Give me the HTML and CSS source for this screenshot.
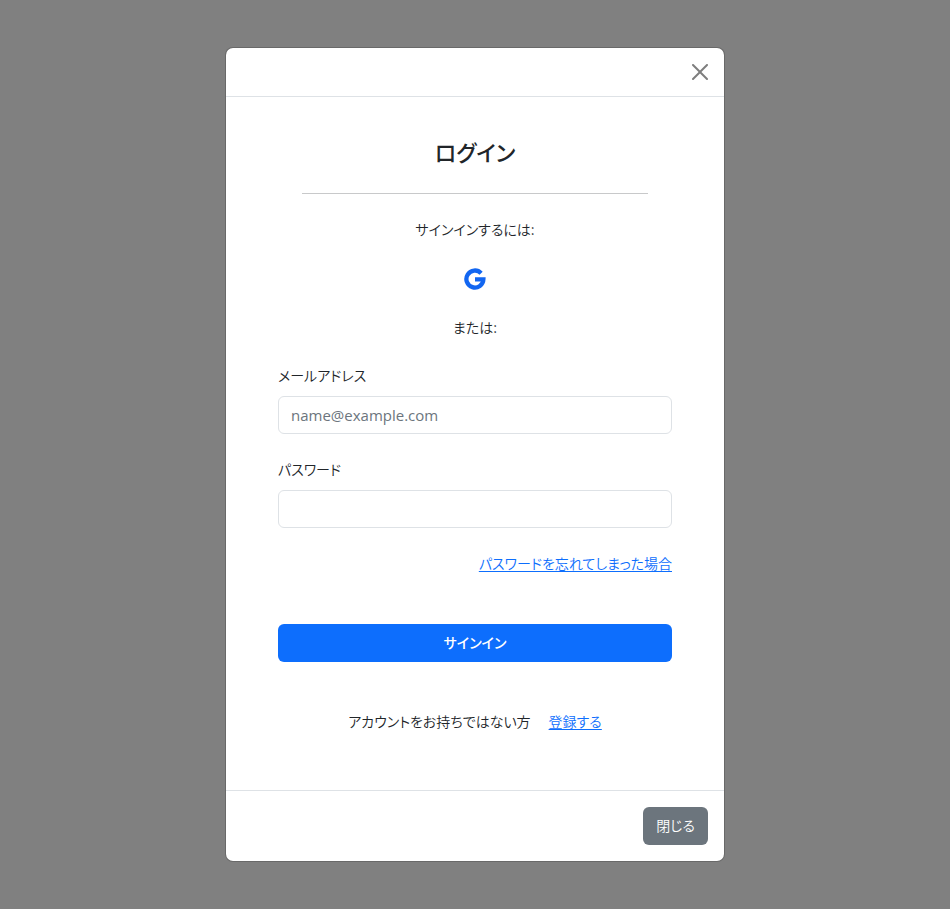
FILE: index.html
```html
<!DOCTYPE html>
<html lang="ja">
<head>
<meta charset="utf-8">
<meta name="viewport" content="width=device-width, initial-scale=1">
<title>ログイン</title>
<link rel="stylesheet" href="styles.css">
</head>
<body>
<div class="modal" role="dialog" aria-modal="true" aria-labelledby="login-title">
  <header class="modal-header">
    <button class="close" type="button" aria-label="閉じる">
      <svg viewBox="0 0 16 16" aria-hidden="true"><path d="M.293.293a1 1 0 0 1 1.414 0L8 6.586 14.293.293a1 1 0 1 1 1.414 1.414L9.414 8l6.293 6.293a1 1 0 0 1-1.414 1.414L8 9.414l-6.293 6.293a1 1 0 0 1-1.414-1.414L6.586 8 .293 1.707a1 1 0 0 1 0-1.414z"/></svg>
    </button>
  </header>
  <main class="modal-body">
    <h1 class="title" id="login-title">ログイン</h1>
    <hr class="divider">
    <p class="note">サインインするには:</p>
    <button class="google" type="button" aria-label="Google">
      <svg viewBox="0 0 22 22" aria-hidden="true"><path d="M17.1 5.2A8.5 8.5 0 1 0 19.4 11.3H11" /></svg>
    </button>
    <p class="note">または:</p>
    <form class="form">
      <div class="field">
        <label for="email">メールアドレス</label>
        <input id="email" type="email" placeholder="name@example.com">
      </div>
      <div class="field">
        <label for="password">パスワード</label>
        <input id="password" type="password">
      </div>
      <a class="forgot" href="#">パスワードを忘れてしまった場合</a>
      <button class="btn btn-primary" type="submit">サインイン</button>
      <p class="register"><span>アカウントをお持ちではない方</span><a href="#">登録する</a></p>
    </form>
  </main>
  <footer class="modal-footer">
    <button class="btn btn-secondary" type="button">閉じる</button>
  </footer>
</div>
</body>
</html>
```
FILE: styles.css
```css
* {
  box-sizing: border-box;
}

body {
  margin: 0;
  min-height: 100vh;
  display: flex;
  align-items: center;
  justify-content: center;
  background: #808080;
  color: #212529;
  font-family: "Noto Sans CJK JP", sans-serif;
  font-size: 14px;
  font-weight: 350;
  line-height: 22px;
  font-feature-settings: "palt";
}

button,
input {
  font: inherit;
  font-feature-settings: inherit;
}

h1,
p {
  margin: 0;
}

a {
  color: #0d6efd;
  text-underline-offset: 2px;
}

.modal {
  width: 100%;
  max-width: 500px;
  background: #fff;
  background-clip: padding-box;
  border: 1px solid rgba(0, 0, 0, 0.175);
  border-radius: 8px;
}

.modal-header,
.modal-footer {
  display: flex;
  justify-content: flex-end;
  padding: 16px;
}

.modal-header {
  border-bottom: 1px solid #dee2e6;
}

.modal-footer {
  border-top: 1px solid #dee2e6;
}

.close,
.google {
  display: block;
  padding: 0;
  border: 0;
  background: none;
}

.close svg,
.google svg {
  display: block;
  width: 16px;
  height: 16px;
}

.close {
  opacity: 0.5;
}

.google {
  margin: 28px 0 26px;
  color: #1266f1;
}

.google svg {
  width: 22px;
  height: 22px;
  fill: none;
  stroke: currentColor;
  stroke-width: 4.3;
}

.modal-body {
  display: flex;
  flex-direction: column;
  align-items: center;
  padding: 38px 52px 58px;
}

.title {
  font-size: 22px;
  font-weight: 500;
  line-height: 32px;
}

.divider {
  width: 88%;
  margin: 26px 0 24px;
  border: 0;
  border-top: 1px solid #c8c9ca;
}

.form {
  display: flex;
  flex-direction: column;
  gap: 24px;
  width: 100%;
  margin-top: 26px;
}

.field {
  display: grid;
  gap: 10px;
}

.field input {
  width: 100%;
  height: 38px;
  padding: 6px 12px;
  border: 1px solid #dee2e6;
  border-radius: 6px;
  background: #fff;
  color: #212529;
  font-family: "Open Sans", "Noto Sans", sans-serif;
  font-size: 15px;
  font-weight: 400;
}

.field input::placeholder {
  color: #6c757d;
  opacity: 1;
}

.forgot {
  align-self: flex-end;
}

.btn {
  padding: 6px 12px 8px;
  border: 1px solid transparent;
  border-radius: 6px;
  color: #fff;
}

.btn-primary {
  margin: 26px 0 24px;
  background: #0d6efd;
  font-weight: 500;
}

.btn-secondary {
  background: #6c757d;
}

.register {
  display: flex;
  justify-content: center;
  gap: 18px;
}
```
